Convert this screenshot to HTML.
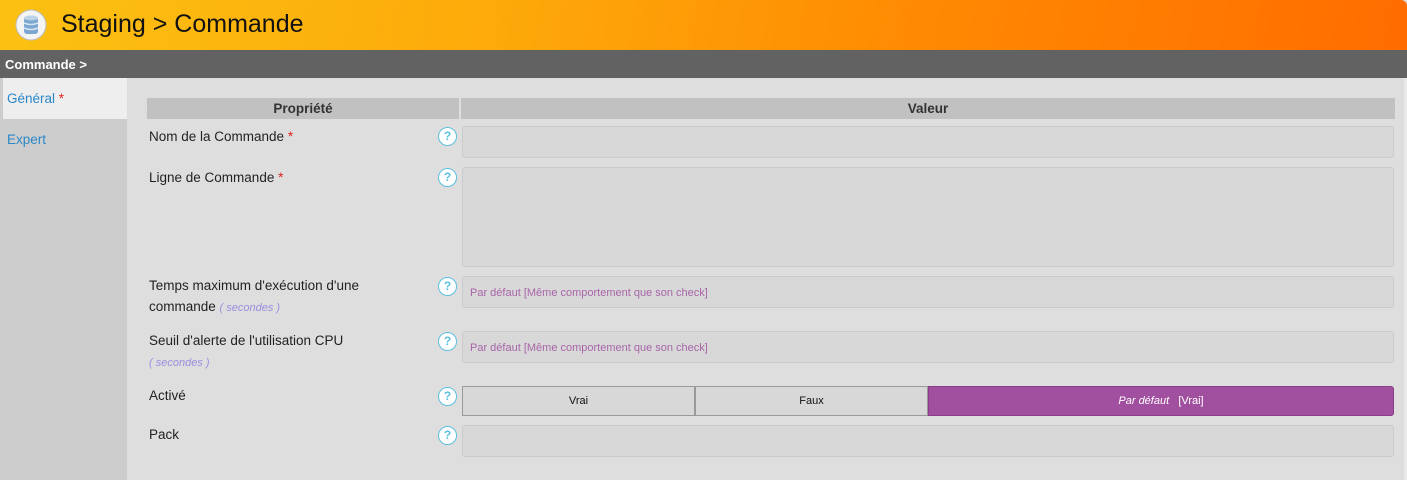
<!DOCTYPE html>
<html><head><meta charset="utf-8"><style>
*{box-sizing:border-box;margin:0;padding:0}
body{width:1407px;height:480px;overflow:hidden;background:#dedede;font-family:"Liberation Sans",sans-serif;position:relative}
.hdr{position:absolute;left:0;top:0;width:1407px;height:50px;background:linear-gradient(100deg,#fbc112 0%,#fdaa0a 35%,#ff8a02 65%,#ff6c00 100%);border-top-right-radius:6px}
.hdr .t{position:absolute;left:61px;top:10px;font-size:25px;color:#111}
.bar{position:absolute;left:0;top:50px;width:1407px;height:28px;background:#626262;color:#fff;font-size:13px;font-weight:bold;padding:7px 5px}
.side{position:absolute;left:0;top:78px;width:127px;height:402px;background:#cdcdcd}
.tab{position:absolute;left:3px;width:124px;height:41px;font-size:13.5px;color:#2a88c8;padding:13px 4px}
.rb{position:absolute;right:0;top:78px;width:3px;height:402px;background:#e9e9e9}
.th{position:absolute;top:98px;height:21px;background:#c1c1c1;font-weight:bold;font-size:13.5px;text-align:center;line-height:21px;color:#333}
.lbl{position:absolute;left:149px;font-size:13.5px;color:#222;line-height:21px}
.star{color:#d22}
.sec{color:#9a8ee0;font-style:italic;font-size:11px}
.q{position:absolute;left:438px;width:19px;height:19px;border:1.5px solid #5bc0de;border-radius:50%;background:#fff;color:#5bc0de;font-size:12px;font-weight:bold;text-align:center;line-height:16px}
.in{position:absolute;left:462px;width:932px;background:#d8d8d8;border:1px solid #cacaca;border-radius:3px;font-size:11px;color:#a865a8;padding:0 7px}
.btn{position:absolute;top:386px;height:30px;background:#d8d8d8;border:1px solid #9a9a9a;font-size:11px;text-align:center;line-height:28px;color:#111}
</style></head><body>
<div class="hdr">
<svg style="position:absolute;left:15px;top:9px" width="32" height="32" viewBox="0 0 32 32"><circle cx="16" cy="16" r="15" fill="#f4f4f4" stroke="#bbb"/><rect x="9" y="8" width="14" height="17" rx="3" fill="#7aa6cf"/><ellipse cx="16" cy="9" rx="7" ry="2.5" fill="#bcd4ea"/><path d="M9 14q7 3 14 0M9 19q7 3 14 0" stroke="#d6e4f2" fill="none" stroke-width="1.5"/></svg>
<div class="t">Staging &gt; Commande</div></div>
<div class="bar">Commande &gt;</div>
<div class="side">
<div class="tab" style="top:0;background:#eeeeee">Général <span class="star">*</span></div>
<div class="tab" style="top:41px">Expert</div>
</div>
<div class="rb"></div>
<div class="th" style="left:147px;width:312px">Propriété</div>
<div class="th" style="left:461px;width:934px">Valeur</div>

<div class="lbl" style="top:126px">Nom de la Commande <span class="star">*</span></div>
<div class="q" style="top:127px">?</div>
<div class="in" style="top:126px;height:32px"></div>

<div class="lbl" style="top:167px">Ligne de Commande <span class="star">*</span></div>
<div class="q" style="top:168px">?</div>
<div class="in" style="top:167px;height:100px"></div>

<div class="lbl" style="top:275px">Temps maximum d'exécution d'une<br>commande <span class="sec">( secondes )</span></div>
<div class="q" style="top:277px">?</div>
<div class="in" style="top:276px;height:32px;line-height:32px">Par défaut [Même comportement que son check]</div>

<div class="lbl" style="top:330px">Seuil d'alerte de l'utilisation CPU<br><span class="sec">( secondes )</span></div>
<div class="q" style="top:332px">?</div>
<div class="in" style="top:331px;height:32px;line-height:32px">Par défaut [Même comportement que son check]</div>

<div class="lbl" style="top:385px">Activé</div>
<div class="q" style="top:387px">?</div>
<div class="btn" style="left:462px;width:233px">Vrai</div>
<div class="btn" style="left:695px;width:233px">Faux</div>
<div class="btn" style="left:928px;width:466px;background:#a14f9f;border-color:#8a3d88;color:#fff;border-radius:0 3px 3px 0"><i>Par défaut</i> &nbsp; [Vrai]</div>

<div class="lbl" style="top:424px">Pack</div>
<div class="q" style="top:426px">?</div>
<div class="in" style="top:425px;height:32px"></div>
</body></html>
